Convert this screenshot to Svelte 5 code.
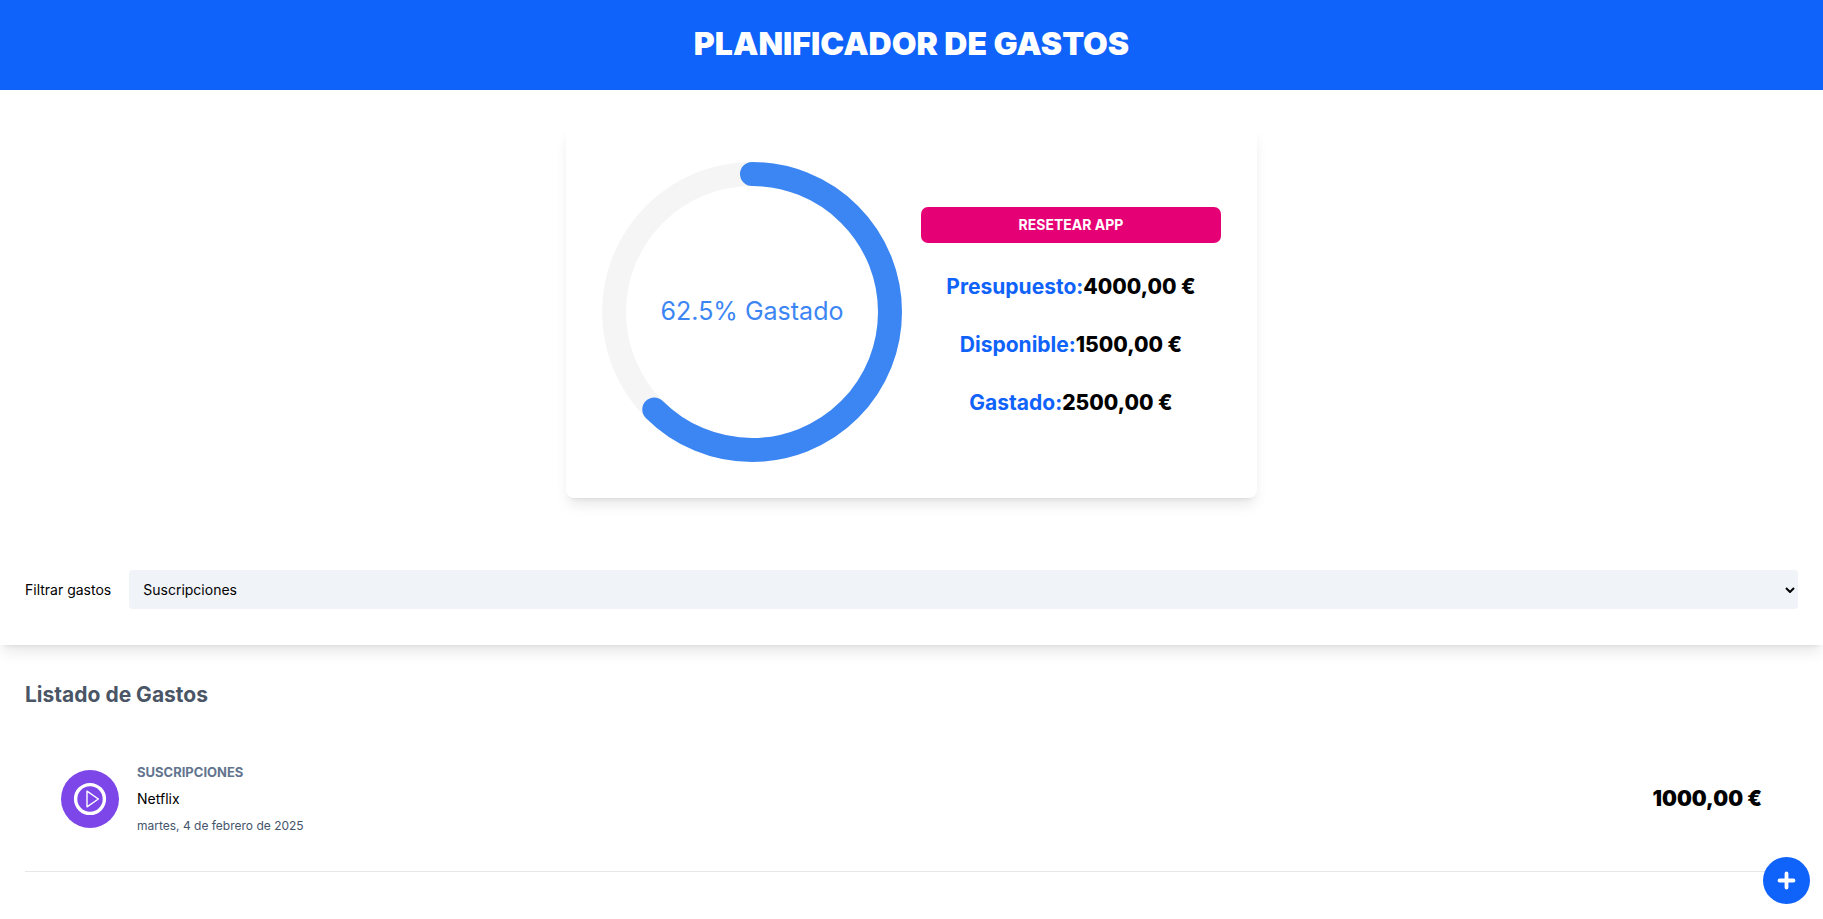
<script lang="ts">
  type Expense = { id: number; category: string; name: string; date: string; amount: number };

  const categories = [
    { id: 'all', name: 'Todas las categorías' },
    { id: 'ahorro', name: 'Ahorro' },
    { id: 'comida', name: 'Comida' },
    { id: 'casa', name: 'Casa' },
    { id: 'suscripciones', name: 'Suscripciones' }
  ];

  const expenses: Expense[] = [
    { id: 1, category: 'suscripciones', name: 'Netflix', date: 'martes, 4 de febrero de 2025', amount: 1000 }
  ];

  const budget = 4000;
  const spent = 2500;
  const percent = (spent / budget) * 100;

  const radius = 46;
  const circumference = 2 * Math.PI * radius;

  let filter = $state('suscripciones');
  const visible = $derived(expenses.filter((e) => filter === 'all' || e.category === filter));

  const money = (n: number) => n.toFixed(2).replace('.', ',') + ' €';
  const totals = [
    { label: 'Presupuesto', value: budget },
    { label: 'Disponible', value: budget - spent },
    { label: 'Gastado', value: spent }
  ];
</script>

<header class="top">
  <h1>Planificador de gastos</h1>
</header>

<section class="card">
  <div class="ring">
    <svg viewBox="0 0 100 100" aria-hidden="true">
      <circle cx="50" cy="50" r={radius} fill="none" stroke="#f5f5f5" stroke-width="8" />
      <circle
        cx="50" cy="50" r={radius} fill="none" stroke="#3c86f4" stroke-width="8" stroke-linecap="round"
        stroke-dasharray="{(circumference * percent) / 100} {circumference}"
        transform="rotate(-90 50 50)"
      />
    </svg>
    <span>{percent}% Gastado</span>
  </div>
  <div class="totals">
    <button class="reset" type="button">Resetear app</button>
    {#each totals as t (t.label)}
      <p>{t.label}:<strong>{money(t.value)}</strong></p>
    {/each}
  </div>
</section>

<main>
  <form class="filter">
    <label for="category">Filtrar gastos</label>
    <div class="select">
      <select id="category" bind:value={filter}>
        {#each categories as c (c.id)}
          <option value={c.id}>{c.name}</option>
        {/each}
      </select>
      <svg viewBox="0 0 10 6" aria-hidden="true">
        <path d="M1 1l4 4 4-4" fill="none" stroke="#000" stroke-width="2" />
      </svg>
    </div>
  </form>

  <section class="list">
    <h2>Listado de Gastos</h2>
    {#each visible as e (e.id)}
      <article>
        <svg class="icon" viewBox="0 0 58 58" aria-hidden="true">
          <circle cx="29" cy="29" r="29" fill="#7c46e8" />
          <circle cx="29" cy="29" r="14.4" fill="none" stroke="#fff" stroke-width="3.4" />
          <path d="M26 21.2v15.6L37.4 29z" fill="none" stroke="#fff" stroke-width="1.4" stroke-linejoin="round" />
        </svg>
        <div class="info">
          <p class="category">{e.category}</p>
          <p>{e.name}</p>
          <p class="date">{e.date}</p>
        </div>
        <p class="amount">{money(e.amount)}</p>
      </article>
    {/each}
  </section>

  <button class="add" type="button" aria-label="Añadir gasto">
    <svg viewBox="0 0 47 47" aria-hidden="true">
      <circle cx="23.5" cy="23.5" r="23.5" fill="#0f62fa" />
      <path d="M23.5 16.5v14M16.5 23.5h14" stroke="#fff" stroke-width="3.8" stroke-linecap="round" />
    </svg>
  </button>
</main>

<style>
  :global(body) {
    margin: 0;
    background: #fff;
    color: #000;
    font: 14px/22px Inter, 'Liberation Sans', sans-serif;
  }
  h1, h2, p { margin: 0; }
  button, select { font: inherit; border: 0; cursor: pointer; }

  .top {
    padding: 26px 0 28px;
    background: #0f62fa;
  }
  h1 {
    color: #fff;
    font-size: 32px;
    line-height: 36px;
    font-weight: 900;
    text-align: center;
    text-transform: uppercase;
  }

  .card {
    box-sizing: border-box;
    display: grid;
    grid-template-columns: 1fr 1fr;
    gap: 19px;
    align-items: center;
    max-width: 691px;
    margin: 36px auto;
    padding: 36px;
    border-radius: 8px;
    background: #fff;
    box-shadow: 0 9px 14px -3px rgb(0 0 0 / 0.1), 0 4px 5px -4px rgb(0 0 0 / 0.1);
  }
  .ring { display: grid; place-items: center; }
  .ring > * { grid-area: 1 / 1; }
  .ring svg { display: block; width: 100%; }
  .ring span { padding-bottom: 2px; color: #3c86f4; font-size: 25px; line-height: 28px; }

  .totals {
    display: flex;
    flex-direction: column;
    gap: 29px;
    color: #0f62fa;
    font-size: 21px;
    line-height: 29px;
    font-weight: 700;
    text-align: center;
  }
  .totals .reset {
    padding: 7px;
    border-radius: 7px;
    background: #e60076;
    color: #fff;
    font-size: 14px;
    line-height: 22px;
    font-weight: 700;
    text-transform: uppercase;
  }
  strong { color: #000; font-weight: 800; }

  .filter {
    display: flex;
    align-items: center;
    gap: 18px;
    padding: 36px 25px;
    background: #fff;
    box-shadow: 0 9px 14px -3px rgb(0 0 0 / 0.1), 0 4px 5px -4px rgb(0 0 0 / 0.1);
  }
  .select { display: grid; flex: 1; align-items: center; }
  .select > * { grid-area: 1 / 1; }
  select {
    appearance: none;
    width: 100%;
    height: 39px;
    padding: 0 14px;
    border-radius: 4px;
    background: #f0f3f8;
    color: #000;
  }
  .select svg {
    justify-self: end;
    width: 10px;
    margin-right: 3px;
    pointer-events: none;
  }

  .list { padding: 36px 25px; }
  h2 { color: #4a5565; font-size: 21px; line-height: 28px; font-weight: 700; }
  article {
    display: flex;
    align-items: center;
    gap: 18px;
    margin-top: 17px;
    padding: 36px 36px 35px;
    border-bottom: 1px solid #e5e7eb;
  }
  .icon { width: 58px; }
  .info { display: grid; flex: 1; gap: 7px; line-height: 20px; }
  .category { color: #62748e; font-size: 13px; font-weight: 700; text-transform: uppercase; }
  .date { color: #45556c; font-size: 12px; }
  .amount { font-size: 21px; font-weight: 900; }

  .add {
    position: fixed;
    right: 13px;
    bottom: 15px;
    padding: 0;
    border-radius: 50%;
    background: none;
  }
  .add svg { display: block; width: 47px; }
</style>
